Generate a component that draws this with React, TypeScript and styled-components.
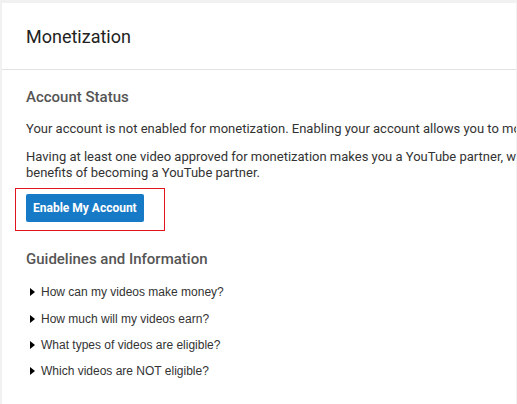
import styled, { createGlobalStyle } from "styled-components";

const GlobalStyle = createGlobalStyle`
  html, body {
    margin: 0;
    padding: 0;
    background: #f1f1f1;
    overflow: hidden;
  }
  body {
    font-family: Roboto, "Liberation Sans", Arial, sans-serif;
  }
`;

const Page = styled.div`
  padding: 3px 0 0 2px;
  height: 401px;
`;

const Card = styled.div`
  background: #fff;
  width: 514px;
  height: 401px;
  overflow: hidden;
`;

const Header = styled.div`
  height: 66px;
  display: flex;
  align-items: center;
  padding: 0 24px;
  border-bottom: 1px solid #e2e2e2;
  font-size: 18px;
  color: #222;
`;

const Body = styled.div`
  padding: 0 24px;
  white-space: nowrap;
`;

const SectionTitle = styled.h2<{ $gap: number }>`
  margin: ${(p) => p.$gap}px 0 0;
  font-size: 15px;
  font-weight: 500;
  line-height: 20px;
  color: #555;
`;

const Text = styled.p<{ $gap: number }>`
  margin: ${(p) => p.$gap}px 0 0;
  font-size: 13px;
  line-height: 16px;
  color: #333;
`;

const Highlight = styled.div`
  display: inline-block;
  margin: 7px 0 0 -11px;
  padding: 5px 20px 8px 10px;
  border: 1px solid #e4141e;
`;

const PrimaryButton = styled.button`
  display: block;
  height: 28px;
  padding: 0 7px;
  border: none;
  border-radius: 2px;
  background: #167ac6;
  color: #fff;
  font-family: inherit;
  font-size: 12px;
  font-weight: 700;
  cursor: pointer;
`;

const List = styled.ul`
  list-style: none;
  margin: 10px 0 0;
  padding: 0;
`;

const Item = styled.li`
  display: flex;
  align-items: center;
  height: 26.4px;
  padding-left: 4px;
  font-family: "Liberation Sans", Arial, sans-serif;
  font-size: 12px;
  color: #333;
`;

const Arrow = styled.span`
  width: 0;
  height: 0;
  margin-right: 6px;
  border-top: 4px solid transparent;
  border-bottom: 4px solid transparent;
  border-left: 5px solid #000;
`;

const questions = [
  "How can my videos make money?",
  "How much will my videos earn?",
  "What types of videos are eligible?",
  "Which videos are NOT eligible?",
];

export default function App() {
  return (
    <>
      <GlobalStyle />
      <Page>
        <Card>
          <Header>Monetization</Header>
          <Body>
            <SectionTitle $gap={17}>Account Status</SectionTitle>
            <Text $gap={14}>
              Your account is not enabled for monetization. Enabling your account allows you to monetize your videos.
            </Text>
            <Text $gap={12}>
              Having at least one video approved for monetization makes you a YouTube partner, which lets you enjoy the
              <br />
              benefits of becoming a YouTube partner.
            </Text>
            <Highlight>
              <PrimaryButton>Enable My Account</PrimaryButton>
            </Highlight>
            <SectionTitle $gap={18}>Guidelines and Information</SectionTitle>
            <List>
              {questions.map((q) => (
                <Item key={q}>
                  <Arrow />
                  {q}
                </Item>
              ))}
            </List>
          </Body>
        </Card>
      </Page>
    </>
  );
}
